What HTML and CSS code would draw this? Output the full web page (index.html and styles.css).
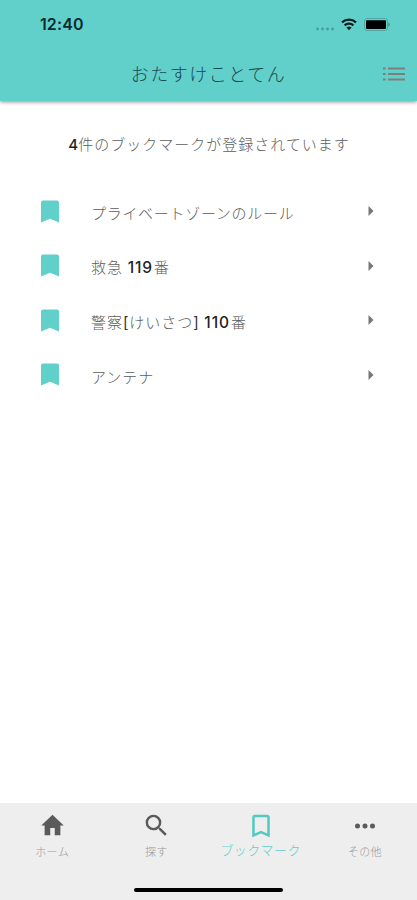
FILE: index.html
```html
<!DOCTYPE html>
<html lang="ja">
<head>
<meta charset="utf-8">
<meta name="viewport" content="width=device-width, initial-scale=1">
<title>おたすけことてん</title>
<link rel="stylesheet" href="styles.css">
</head>
<body>
<div class="app">
  <header class="header">
    <div class="status">
      <span class="time">12:40</span>
      <div class="indicators">
        <svg class="signal" width="20" height="4" viewBox="0 0 20 4"><circle cx="2.5" cy="2" r="1.4"/><circle cx="7.5" cy="2" r="1.4"/><circle cx="12.5" cy="2" r="1.4"/><circle cx="17.5" cy="2" r="1.4"/></svg>
        <svg class="wifi" width="16" height="13" viewBox="0 0 16 13"><path d="M1 4.4a10.4 10.4 0 0 1 14 0M3.6 7.4a6.4 6.4 0 0 1 8.8 0" fill="none" stroke="#0b1f22" stroke-width="2.2"/><path d="M5.4 9.6a4 4 0 0 1 5.2 0L8 12.3z" fill="#0b1f22"/></svg>
        <svg class="battery" width="27" height="13" viewBox="0 0 27 13"><rect x=".5" y=".5" width="23" height="12" rx="2.5" fill="none" stroke="#4fa9a5"/><rect x="2" y="2.3" width="20" height="8.6" rx=".8" fill="#000"/><path d="M24.5 4.2q2.2 2.3 0 4.6z" fill="#31706e"/></svg>
      </div>
    </div>
    <div class="titlebar">
      <h1 class="title">おたすけことてん</h1>
      <svg class="menu" width="24" height="14" viewBox="0 0 24 14"><path d="M1 1.6h2.6M1 7h2.6M1 12.4h2.6M6 1.6h17M6 7h17M6 12.4h17" stroke="#7d7f7d" stroke-width="2"/></svg>
    </div>
  </header>
  <main class="content">
    <p class="summary"><span class="num">4</span>件のブックマークが登録されています</p>
    <ul class="list">
      <li class="row"><svg class="mark" width="18" height="23" viewBox="0 0 18 23"><path d="M2 .5h14a2 2 0 0 1 2 2v20l-9-3.8-9 3.8v-20a2 2 0 0 1 2-2z"/></svg><span class="label">プライベートゾーンのルール</span><svg class="arrow" width="6" height="10" viewBox="0 0 6 10"><path d="M.5 0 5.5 5 .5 10z"/></svg></li>
      <li class="row"><svg class="mark" width="18" height="23" viewBox="0 0 18 23"><path d="M2 .5h14a2 2 0 0 1 2 2v20l-9-3.8-9 3.8v-20a2 2 0 0 1 2-2z"/></svg><span class="label">救急 <span class="num">119</span>番</span><svg class="arrow" width="6" height="10" viewBox="0 0 6 10"><path d="M.5 0 5.5 5 .5 10z"/></svg></li>
      <li class="row"><svg class="mark" width="18" height="23" viewBox="0 0 18 23"><path d="M2 .5h14a2 2 0 0 1 2 2v20l-9-3.8-9 3.8v-20a2 2 0 0 1 2-2z"/></svg><span class="label">警察<span class="bracket">[</span>けいさつ<span class="bracket">]</span> <span class="num">110</span>番</span><svg class="arrow" width="6" height="10" viewBox="0 0 6 10"><path d="M.5 0 5.5 5 .5 10z"/></svg></li>
      <li class="row"><svg class="mark" width="18" height="23" viewBox="0 0 18 23"><path d="M2 .5h14a2 2 0 0 1 2 2v20l-9-3.8-9 3.8v-20a2 2 0 0 1 2-2z"/></svg><span class="label">アンテナ</span><svg class="arrow" width="6" height="10" viewBox="0 0 6 10"><path d="M.5 0 5.5 5 .5 10z"/></svg></li>
    </ul>
  </main>
  <footer class="footer">
    <nav class="tabs">
      <a class="tab"><svg width="27" height="29" viewBox="0 0 24 24" preserveAspectRatio="none"><path d="M10 20v-6h4v6h5v-8h3L12 3 2 12h3v8z"/></svg><span>ホーム</span></a>
      <a class="tab"><svg width="29" height="29" viewBox="0 0 24 24"><path d="M15.5 14h-.79l-.28-.27A6.47 6.47 0 0 0 16 9.5 6.5 6.5 0 1 0 9.5 16c1.61 0 3.09-.59 4.23-1.57l.27.28v.79l5 4.99L20.49 19zm-6 0a4.5 4.5 0 1 1 0-9 4.5 4.5 0 0 1 0 9z"/></svg><span>探す</span></a>
      <a class="tab active"><svg width="30" height="30" viewBox="0 0 24 24"><path d="M17 3H7a2 2 0 0 0-2 2v16l7-3 7 3V5a2 2 0 0 0-2-2zm0 15-5-2.18L7 18V5h10z"/></svg><span>ブックマーク</span></a>
      <a class="tab"><svg width="30" height="30" viewBox="0 0 24 24"><path d="M6 10a2 2 0 1 0 0 4 2 2 0 0 0 0-4zm12 0a2 2 0 1 0 0 4 2 2 0 0 0 0-4zm-6 0a2 2 0 1 0 0 4 2 2 0 0 0 0-4z"/></svg><span>その他</span></a>
    </nav>
    <div class="home-bar"></div>
  </footer>
</div>
</body>
</html>
```
FILE: styles.css
```css
* { box-sizing: border-box; }
body { margin: 0; background: #fff; font-family: "Noto Sans CJK JP", sans-serif; font-weight: 300; }
svg { display: block; flex: none; }
.app { display: flex; flex-direction: column; width: 417px; height: 900px; overflow: hidden; }
.header { flex: none; height: 101px; background: #62d0ca; box-shadow: 0 1px 4px rgba(0, 0, 0, .45); }
.status { display: flex; align-items: center; justify-content: space-between; height: 48px; padding: 0 26px 0 40px; }
.time { font: 600 16px/20px Inter, sans-serif; letter-spacing: .1px; color: #0c2b30; }
.indicators { display: flex; align-items: center; }
.signal { margin: 9px 6px 0 0; fill: #45a09c; }
.wifi { margin-right: 7px; }
.titlebar { display: flex; align-items: center; height: 51px; padding: 0 11px 0 35px; }
.title { flex: 1; margin: -1px 0 0; text-align: center; font-size: 18px; font-weight: 300; line-height: 26px; letter-spacing: 1.5px; color: #174b50; }
.content { flex: 1; padding-top: 31px; }
.summary { margin: 0 0 0 1px; text-align: center; font-size: 15px; line-height: 24px; letter-spacing: 1px; color: #5c5c5c; }
.num { font-family: Inter, sans-serif; font-weight: 500; letter-spacing: .2px; color: #222; }
.bracket { font-family: Inter, sans-serif; font-weight: 400; color: #333; }
.list { margin: 27px 0 0; padding: 0; list-style: none; }
.row { display: flex; align-items: center; height: 54.5px; padding: 0 43px 0 41px; }
.mark { fill: #62d0ca; }
.label { flex: 1; margin: 4px 0 0 32px; font-size: 15px; line-height: 24px; letter-spacing: .7px; color: #5c5c5c; }
.row:nth-child(n+2) .label { letter-spacing: .95px; }
.label .num { margin: 0 1px 0 .5px; font-size: 15.5px; letter-spacing: .9px; }
.arrow { fill: #777; }
.footer { flex: none; display: flex; flex-direction: column; align-items: center; height: 97px; background: #eee; }
.tabs { display: grid; grid-template-columns: repeat(4, 1fr); width: 100%; height: 85px; }
.tab { display: grid; grid-template-rows: 45px 18px; align-items: center; justify-items: center; align-content: start; font-size: 11px; line-height: 18px; letter-spacing: .4px; color: #999; fill: #5a5a5a; }
.tab.active { font-size: 13px; color: #62cfc8; fill: #54c8c1; }
.tab span { margin-top: -12px; }
.tab.active span { margin-top: -15px; }
.home-bar { width: 149px; height: 4px; border-radius: 2px; background: #000; }
```
